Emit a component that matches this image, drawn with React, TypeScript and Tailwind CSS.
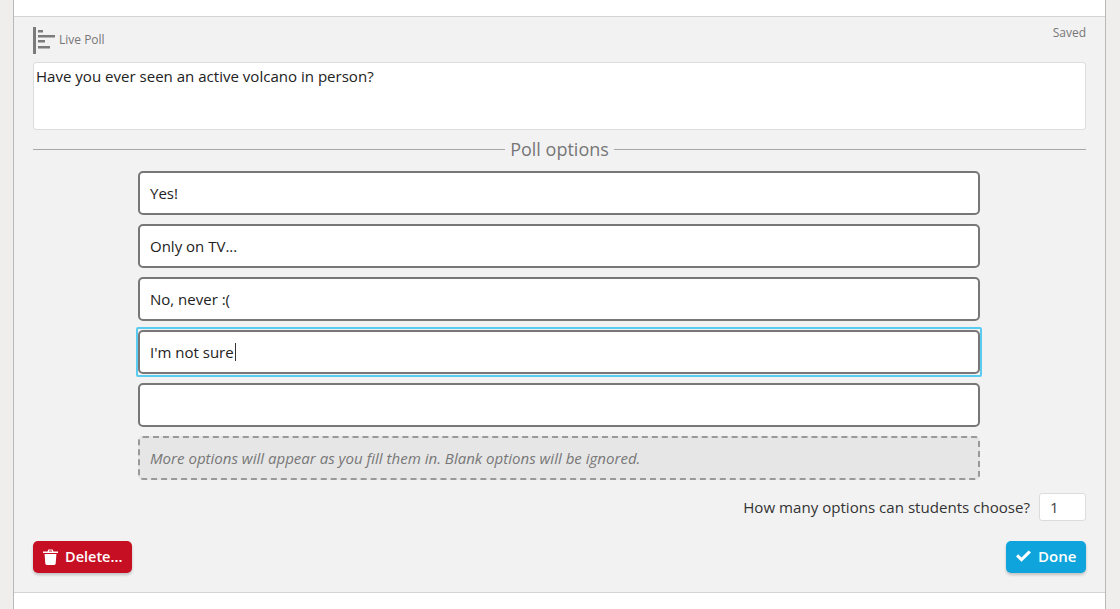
const options = ["Yes!", "Only on TV...", "No, never :("];
const font = "font-['Open_Sans','Noto_Sans',sans-serif]";
const field =
  "h-[44px] w-full rounded-[5px] border-2 border-[#777777] bg-white px-[10px] flex items-center text-[15px] text-[#222222]";

function PollIcon() {
  return (
    <svg width="23" height="27" viewBox="0 0 23 27" className="shrink-0">
      <rect x="0" y="0" width="3" height="27" fill="#7b7b7b" />
      <rect x="5" y="3" width="5" height="2.5" fill="#7b7b7b" />
      <rect x="5" y="8" width="17" height="2.5" fill="#7b7b7b" />
      <rect x="5" y="13" width="7" height="2.5" fill="#7b7b7b" />
      <rect x="5" y="19" width="12" height="2.5" fill="#7b7b7b" />
    </svg>
  );
}

function Trash() {
  return (
    <svg width="15" height="16" viewBox="0 0 15 16" className="shrink-0">
      <path d="M0 2.4 H4.6 L5.3 0.4 H9.7 L10.4 2.4 H15 V4 H0 Z M5.9 2.4 H9.1 L8.8 1.5 H6.2 Z" fill="white" fillRule="evenodd" />
      <path d="M1.6 5 H13.4 L12.7 14.6 Q12.6 16 11.2 16 H3.8 Q2.4 16 2.3 14.6 Z" fill="white" />
    </svg>
  );
}

function Check() {
  return (
    <svg width="15" height="12" viewBox="0 0 15 12" className="shrink-0">
      <path d="M0 6.4 L2.2 4.2 L5.5 7.4 L12.6 0.4 L15 2.6 L5.5 11.8 Z" fill="white" />
    </svg>
  );
}

export default function App() {
  return (
    <div className={`${font} h-[609px] w-[1120px] overflow-hidden bg-[#efeeec] pl-[13px] pr-[14px]`}>
      <div className="flex h-full flex-col border-x border-[#b9b9b9] bg-white">
        <div className="h-[16px] shrink-0" />
        <div className="flex h-[577px] shrink-0 flex-col border-y border-[#d4d4d4] bg-[#f2f2f2] px-[19px]">
          <div className="flex h-[45px] shrink-0 items-start justify-between">
            <div className="mt-[10px] flex items-center gap-[3px]">
              <PollIcon />
              <span className="mb-[2px] text-[12px] text-[#777777]">Live Poll</span>
            </div>
            <span className="mt-[7px] text-[12px] text-[#777777]">Saved</span>
          </div>
          <div className="h-[68px] shrink-0 rounded-[3px] border border-[#dcdcdc] bg-white p-[2px] text-[15.05px] leading-[22px] text-[#222222]">
            Have you ever seen an active volcano in person?
          </div>
          <div className="mt-[6px] flex h-[26px] shrink-0 items-center gap-[5px]">
            <div className="h-px flex-1 bg-[#a8a8a8]" />
            <span className="text-[18px] text-[#777777]">Poll options</span>
            <div className="h-px flex-1 bg-[#a8a8a8]" />
          </div>
          <div className="ml-[105px] mt-[9px] flex w-[842px] shrink-0 flex-col gap-[9px]">
            {options.map((o) => (
              <div key={o} className={field}>
                {o}
              </div>
            ))}
            <div className="-mx-[2px] -my-[3px] rounded-[2px] border-2 border-[#5ccbf0] py-px">
              <div className={field}>
                I'm not sure
                <span className="ml-px inline-block h-[18px] w-px bg-[#333333]" />
              </div>
            </div>
            <div className={field} />
            <div className="flex h-[44px] items-center rounded-[5px] border-2 border-dashed border-[#999999] bg-[#e6e6e6] px-[10px] text-[15.05px] italic text-[#777777]">
              More options will appear as you fill them in. Blank options will be ignored.
            </div>
          </div>
          <div className="mt-[13px] flex shrink-0 items-center justify-end gap-[9px]">
            <span className="text-[15.1px] text-[#333333]">How many options can students choose?</span>
            <div className="flex h-[28px] w-[47px] items-center rounded-[3px] border border-[#dcdcdc] bg-white pl-[10px] text-[15px] text-[#444444]">
              1
            </div>
          </div>
          <div className="mt-[20px] flex shrink-0 items-center justify-between">
            <div className="flex h-[32px] w-[99px] items-center gap-[7px] rounded-[5px] bg-[#c70f23] pl-[10px] text-[14.5px] font-semibold text-white shadow-[0_2px_3px_rgba(0,0,0,0.2)]">
              <Trash />
              Delete...
            </div>
            <div className="flex h-[32px] w-[80px] items-center gap-[7px] rounded-[5px] bg-[#0fa5dc] pb-[2px] pl-[10px] text-[15px] font-semibold text-white shadow-[0_2px_3px_rgba(0,0,0,0.2)]">
              <Check />
              Done
            </div>
          </div>
        </div>
        <div className="flex-1" />
      </div>
    </div>
  );
}
